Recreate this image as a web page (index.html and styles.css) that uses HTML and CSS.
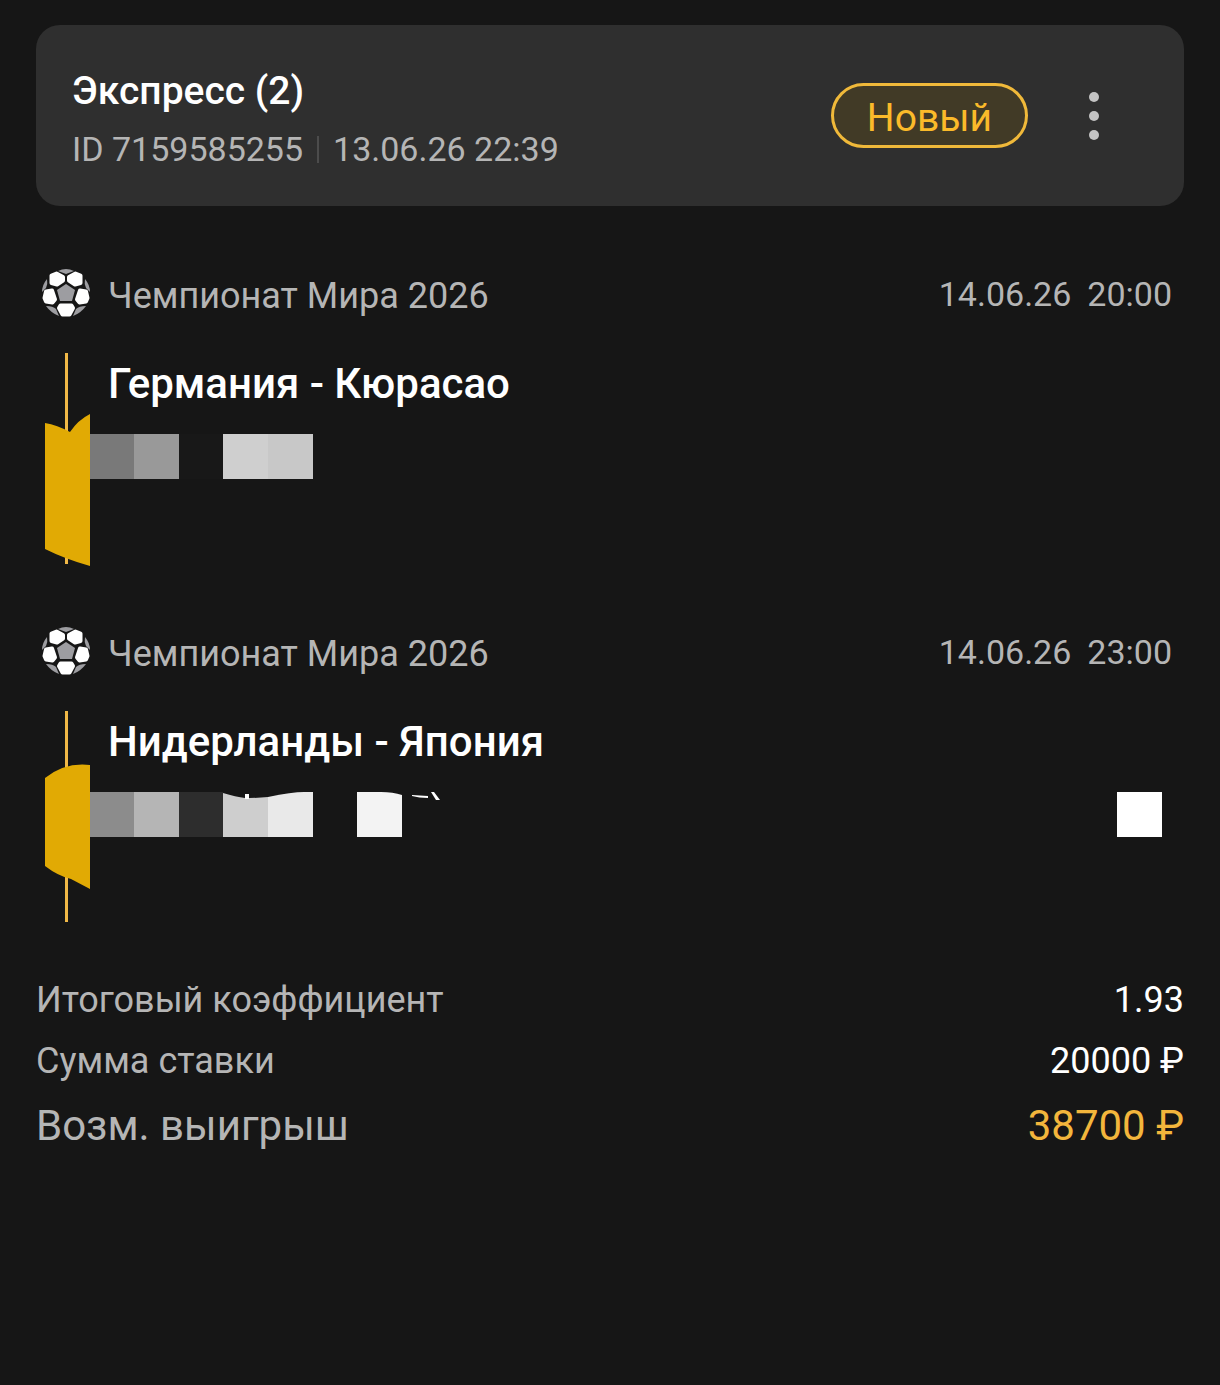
FILE: index.html
```html
<!DOCTYPE html>
<html lang="ru">
<head>
  <meta charset="UTF-8" />
  <meta name="viewport" content="width=device-width, initial-scale=1.0" />
  <title>Экспресс (2)</title>
  <link rel="stylesheet" href="styles.css">
</head>
<body>
  <!-- Мяч используется в обоих событиях -->
  <svg class="sprite" aria-hidden="true">
    <symbol id="ball" viewBox="0 0 48 48">
      <g fill="#9d9da1">
        <path d="M16 2Q24 -2 32 2L24 5Z" />
        <path d="M5 10Q0 16 0 23L4 19Q6 15 5 10Z" />
        <path d="M43 10Q48 16 48 23L44 19Q42 15 43 10Z" />
        <path d="M4 37Q9 44 17 47L14 40Q11 37 4 37Z" />
        <path d="M44 37Q39 44 31 47L34 40Q37 37 44 37Z" />
        <path d="M24 15L33 21L30 32H18L15 21Z" />
      </g>
      <g fill="#fff" stroke="#fff" stroke-width="4" stroke-linejoin="round">
        <path d="M9.5 6.5L14.5 4.5L21 8V11.5L15 15.5L9.5 14Z" />
        <path d="M38.5 6.5L33.5 4.5L27 8V11.5L33 15.5L38.5 14Z" />
        <path d="M4 22.5L10 21.5L13 30.5L10.5 33.5L4 32.5L2.5 29Z" />
        <path d="M44 22.5L38 21.5L35 30.5L37.5 33.5L44 32.5L45.5 29Z" />
        <path d="M18.5 36.5H29.5L31 39L27.5 45.5H20.5L17 39Z" />
      </g>
    </symbol>
  </svg>

  <main class="coupon">
    <header class="card">
      <div class="card-info">
        <h1>Экспресс (2)</h1>
        <p class="card-meta">
          <span>ID 7159585255</span>
          <span class="divider"></span>
          <span>13.06.26 22:39</span>
        </p>
      </div>
      <span class="badge">Новый</span>
      <button class="menu-button" type="button" aria-label="Меню">
        <svg width="10" height="48" viewBox="0 0 10 48" fill="#c4c4c4">
          <circle cx="5" cy="5" r="5" />
          <circle cx="5" cy="24" r="5" />
          <circle cx="5" cy="43" r="5" />
        </svg>
      </button>
    </header>

    <section class="event">
      <div class="event-header">
        <svg class="ball"><use href="#ball" /></svg>
        <span class="league">Чемпионат Мира 2026</span>
        <time class="event-time" datetime="2026-06-14T20:00"><span>14.06.26</span><span>20:00</span></time>
      </div>
      <div class="event-body">
        <svg class="rail" viewBox="0 0 54 213">
          <path d="M29 0H32V211H29Z" fill="#f0b847" />
          <path d="M9 70Q21 72 34 79Q42 67 54 61V213Q29 206 9 196Z" fill="#e1aa04" />
        </svg>
        <div class="event-content">
          <h2>Германия - Кюрасао</h2>
          <!-- Скрытый исход -->
          <div class="hidden-pick">
            <svg width="223" height="45" viewBox="0 0 223 45">
              <path d="M0 0H44V45H0Z" fill="#797979" />
              <path d="M44 0H89V45H44Z" fill="#999" />
              <path d="M89 0H133V45H89Z" fill="#181818" />
              <path d="M133 0H178V45H133Z" fill="#cfcfcf" />
              <path d="M178 0H223V45H178Z" fill="#c8c8c8" />
            </svg>
          </div>
        </div>
      </div>
    </section>

    <section class="event">
      <div class="event-header">
        <svg class="ball"><use href="#ball" /></svg>
        <span class="league">Чемпионат Мира 2026</span>
        <time class="event-time" datetime="2026-06-14T23:00"><span>14.06.26</span><span>23:00</span></time>
      </div>
      <div class="event-body">
        <svg class="rail" viewBox="0 0 54 213">
          <path d="M29 0H32V211H29Z" fill="#f0b847" />
          <path d="M9 67Q29 51 54 54V178L35 168Q22 165 9 155Z" fill="#e1aa04" />
        </svg>
        <div class="event-content">
          <h2>Нидерланды - Япония</h2>
          <!-- Скрытый исход и коэффициент -->
          <div class="hidden-pick">
            <svg width="352" height="45" viewBox="0 0 352 45">
              <path d="M0 0H44V45H0Z" fill="#8c8c8c" />
              <path d="M44 0H89V45H44Z" fill="#b5b5b5" />
              <path d="M89 0H133V45H89Z" fill="#2d2d2d" />
              <path d="M133 1Q146 5 155 6V3H159V6Q169 6 178 5V45H133Z" fill="#cecece" />
              <path d="M155 2H159V7H155Z" fill="#fff" />
              <path d="M178 5Q202 0 214 0H223V45H178Z" fill="#e9e9e9" />
              <path d="M267 0H291Q303 0 312 3V45H267Z" fill="#f3f3f3" />
              <path d="M322 3L338 4V6Q329 6 322 4ZM341 0L344 0L350 8H346Z" fill="#fff" />
            </svg>
            <span class="hidden-odds"></span>
          </div>
        </div>
      </div>
    </section>

    <dl class="totals">
      <div class="total-row">
        <dt>Итоговый коэффициент</dt>
        <dd>1.93</dd>
      </div>
      <div class="total-row">
        <dt>Сумма ставки</dt>
        <dd>20000 ₽</dd>
      </div>
      <div class="total-row total-win">
        <dt>Возм. выигрыш</dt>
        <dd>38700 ₽</dd>
      </div>
    </dl>
  </main>
</body>
</html>
```

FILE: styles.css
```css
* {
  box-sizing: border-box;
}

body {
  margin: 0;
  background-color: #161616;
  color: #b5b5b5;
  font-family: Roboto, "Liberation Sans", sans-serif;
  font-size: 36px;
  line-height: 44px;
}

h1, h2, p, dl, dd {
  margin: 0;
}

.sprite {
  display: none;
}

.coupon {
  padding: 25px 36px;
}

/* Шапка купона */
.card {
  display: flex;
  align-items: center;
  padding: 32px 72px 32px 36px;
  margin-bottom: 59px;
  background-color: #2f2f2f;
  border-radius: 24px;
}

.card-info {
  flex: 1;
}

h1 {
  color: #fff;
  font-size: 39px;
  font-weight: 500;
  line-height: 68px;
}

.card-meta {
  display: flex;
  align-items: center;
  gap: 14px;
  font-size: 34px;
  line-height: 49px;
}

.divider {
  width: 2px;
  height: 27px;
  background-color: #4c4c4c;
}

.badge {
  padding: 3px 33px 0;
  height: 65px;
  border: 3px solid #f0b93a;
  border-radius: 33px;
  background-color: #413a26;
  color: #fbba2a;
  font-size: 39px;
  line-height: 58px;
}

.menu-button {
  display: flex;
  justify-content: center;
  width: 36px;
  margin-left: 48px;
  padding: 0;
  border: none;
  background: none;
  cursor: pointer;
}

/* Событие */
.event {
  margin-bottom: 57px;
}

.event-header {
  display: flex;
  align-items: center;
  height: 56px;
  padding: 0 12px 0 6px;
  margin-bottom: 32px;
}

.ball {
  width: 48px;
  height: 48px;
}

.league {
  flex: 1;
  padding-top: 6px;
  margin-left: 18px;
}

.event-time {
  display: flex;
  gap: 16px;
  padding-top: 2px;
  font-size: 34px;
}

.event-body {
  display: flex;
}

.rail {
  flex: none;
  width: 54px;
  height: 213px;
}

.event-content {
  flex: 1;
}

h2 {
  padding-left: 18px;
  margin-bottom: 19px;
  color: #fff;
  font-size: 42px;
  font-weight: 500;
  line-height: 62px;
}

.hidden-pick {
  display: flex;
  justify-content: space-between;
  padding-right: 22px;
}

.hidden-odds {
  width: 45px;
  height: 45px;
  background-color: #fff;
}

/* Итоги */
.event:last-of-type {
  margin-bottom: 46px;
}

.total-row {
  display: flex;
  justify-content: space-between;
  line-height: 61px;
}

.total-row dd {
  color: #fff;
}

.total-win {
  font-size: 42px;
  line-height: 68px;
}

.total-win dd {
  color: #f3b63c;
}
```
